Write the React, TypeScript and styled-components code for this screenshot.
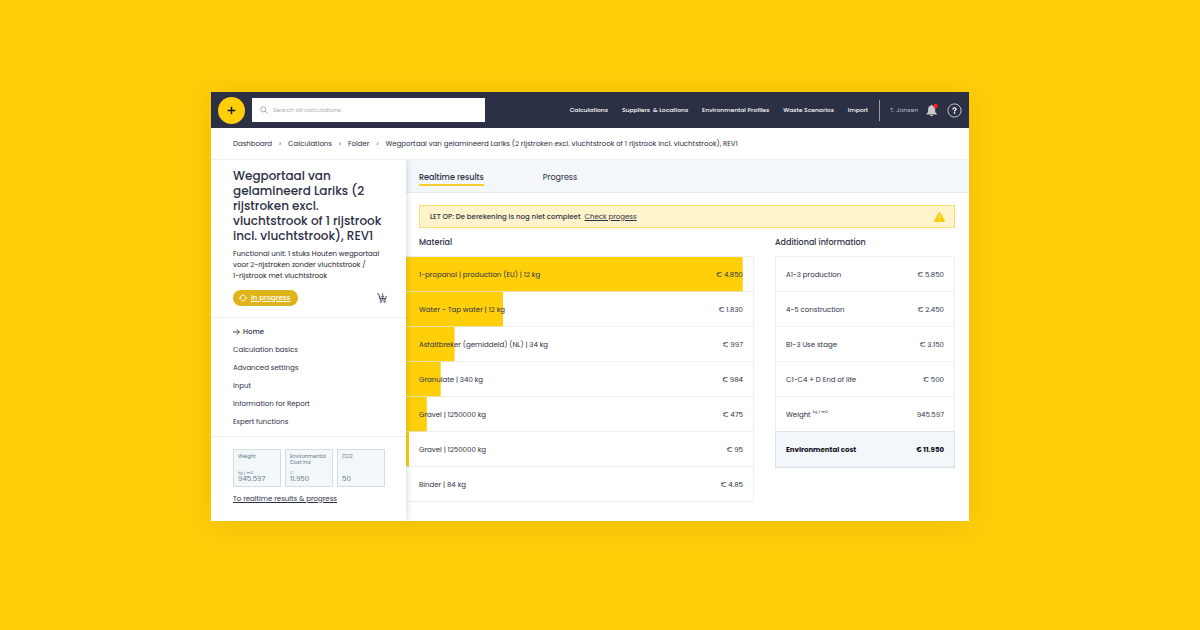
import React from "react";
import styled, { createGlobalStyle } from "styled-components";

const ink = "#2c3044";
const yellow = "#ffcf0a";
const line = "#edeff0";
const mist = "#f3f7fa";

const GlobalStyle = createGlobalStyle`
  *, *::before, *::after { box-sizing: border-box; }
  body {
    margin: 0;
    background: ${yellow};
    color: ${ink};
    font-family: Poppins, Inter, "Liberation Sans", sans-serif;
    font-size: 7px;
    line-height: 12px;
  }
  a { color: inherit; text-decoration: none; }
  button, input { font: inherit; color: inherit; }
  h1, h2, p, ul, ol, dl, dd { margin: 0; padding: 0; }
  ul, ol { list-style: none; }
`;

const Page = styled.div`
  min-height: 100vh;
  padding: 92px 231px 109px 211px;
`;

const Window = styled.div`
  display: flex;
  flex-direction: column;
  min-width: 720px;
  background: #fff;
  box-shadow: 0 4px 28px rgba(120, 90, 0, 0.16);
`;

const TopBar = styled.header`
  display: flex;
  align-items: center;
  height: 36px;
  padding: 0 7px;
  background: ${ink};
  color: #fff;
`;

const AddButton = styled.button`
  display: grid;
  place-items: center;
  flex: none;
  width: 27px;
  height: 27px;
  padding: 0;
  border: 0;
  border-radius: 50%;
  background: ${yellow};
  color: #16181f;
  cursor: pointer;
`;

const SearchBox = styled.label`
  display: flex;
  align-items: center;
  gap: 5px;
  flex: 0 1 233px;
  height: 24px;
  margin-left: 7px;
  padding: 0 8px;
  background: #fff;
  color: #9c9ea6;
`;

const SearchInput = styled.input`
  flex: 1;
  min-width: 0;
  padding: 0;
  border: 0;
  outline: 0;
  background: transparent;
  font-size: 6px;
  line-height: 12px;
  &::placeholder { color: #a9aab0; opacity: 1; }
`;

const MainNav = styled.nav`
  display: flex;
  gap: 14px;
  margin-left: auto;
  padding-right: 11px;
  font-size: 6px;
  font-weight: 500;
  white-space: pre;
`;

const UserArea = styled.div`
  display: flex;
  align-items: center;
  height: 21px;
  padding-left: 10px;
  border-left: 1px solid #9a9ca6;
  color: #b9bbc3;
  font-size: 6px;
  white-space: nowrap;
`;

const IconButton = styled.button`
  display: grid;
  place-items: center;
  padding: 0;
  border: 0;
  background: transparent;
  cursor: pointer;
`;

const BellButton = styled(IconButton)`
  margin: 0 9px 0 8px;
`;

const Breadcrumbs = styled.ol`
  display: flex;
  align-items: center;
  height: 32px;
  padding: 0 22px;
  border-bottom: 1px solid ${line};
  white-space: nowrap;
`;

const Crumb = styled.li`
  & + &::before {
    content: "›";
    margin: 0 7px;
  }
`;

const Body = styled.div`
  display: grid;
  grid-template-columns: 195px 1fr;
`;

const Sidebar = styled.aside`
  z-index: 1;
  box-shadow: 2px 0 5px rgba(40, 50, 70, 0.14);
  clip-path: inset(0 -8px 0 0);
`;

const Summary = styled.section`
  padding: 8px 19px 11px 22px;
  border-bottom: 1px solid ${line};
`;

const Title = styled.h1`
  font-size: 12px;
  line-height: 15px;
  font-weight: 500;
  white-space: nowrap;
`;

const Unit = styled.p`
  margin-top: 5px;
  line-height: 11px;
  color: #23252f;
  white-space: nowrap;
`;

const StatusRow = styled.div`
  display: flex;
  align-items: center;
  justify-content: space-between;
  margin-top: 9px;
`;

const Status = styled.a`
  display: flex;
  align-items: center;
  gap: 4px;
  height: 16px;
  padding: 0 8px 0 6px;
  border-radius: 8px;
  background: #dfb31a;
  color: #fff;
  font-weight: 500;
  span { text-decoration: underline; }
`;

const SideNav = styled.nav`
  display: flex;
  flex-direction: column;
  gap: 6px;
  padding: 8px 22px;
  border-bottom: 1px solid ${line};
`;

const SideLink = styled.a<{ $active?: boolean }>`
  display: flex;
  align-items: center;
  gap: 3px;
  font-weight: ${(p) => (p.$active ? 500 : 400)};
`;

const Totals = styled.section`
  padding: 12px 20px 16px 22px;
`;

const TotalCards = styled.dl`
  display: grid;
  grid-template-columns: repeat(3, 48px);
  gap: 4px;
  margin-bottom: 6px;
`;

const TotalCard = styled.div`
  display: flex;
  flex-direction: column;
  justify-content: space-between;
  height: 38px;
  padding: 4px 4px 3px;
  border: 1px solid #d2dfe5;
  background: ${mist};
  color: #5d7c88;
`;

const TotalLabel = styled.dt`
  font-size: 5px;
  line-height: 6px;
`;

const TotalValue = styled.dd`
  line-height: 8px;
  small {
    display: block;
    font-size: 4px;
    line-height: 5px;
  }
`;

const Underlined = styled.a`
  text-decoration: underline;
  text-underline-offset: 1px;
`;

const Content = styled.main`
  min-width: 0;
`;

const Tabs = styled.nav`
  display: flex;
  align-items: flex-start;
  gap: 59px;
  height: 33px;
  padding: 12px 13px 0;
  border-bottom: 1px solid #e4e9ed;
  background: ${mist};
  font-size: 8px;
`;

const Tab = styled.a<{ $active?: boolean }>`
  border-bottom: 2px solid ${(p) => (p.$active ? "#f8cf2c" : "transparent")};
  font-weight: ${(p) => (p.$active ? 500 : 400)};
`;

const Alert = styled.div`
  display: flex;
  align-items: center;
  gap: 4px;
  height: 23px;
  margin: 12px 14px 0 13px;
  padding: 0 9px 0 10px;
  border: 1px solid #f7e06c;
  background: #fff3cb;
  svg { margin-left: auto; }
`;

const AlertText = styled.span`
  font-weight: 500;
`;

const Panels = styled.div`
  display: grid;
  grid-template-columns: 1fr 180px;
  align-items: start;
  gap: 21px;
  padding: 7px 14px 19px 0;
`;

const Heading = styled.h2<{ $inset?: boolean }>`
  height: 21px;
  padding-left: ${(p) => (p.$inset ? 13 : 0)}px;
  font-size: 8px;
  line-height: 16px;
  font-weight: 500;
`;

const DataTable = styled.table<{ $boxed?: boolean }>`
  width: 100%;
  border-spacing: 0;
  border: 1px solid ${line};
  border-bottom: 0;
  border-left-width: ${(p) => (p.$boxed ? 1 : 0)}px;
`;

const Row = styled.tr<{ $share?: number; $total?: boolean }>`
  height: 35px;
  background-color: ${(p) => (p.$total ? mist : "transparent")};
  background-image: linear-gradient(${yellow}, ${yellow});
  background-repeat: no-repeat;
  background-size: ${(p) => p.$share ?? 0}% 100%;
  font-weight: ${(p) => (p.$total ? 700 : 400)};
  color: ${(p) => (p.$total ? "#0b0d16" : ink)};
  outline: ${(p) => (p.$total ? "1px solid #d7e3e6" : "none")};
`;

const Name = styled.th<{ $inset: number }>`
  padding: 1px 0 0 ${(p) => p.$inset}px;
  border-bottom: 1px solid rgba(228, 231, 233, 0.7);
  font-weight: inherit;
  text-align: left;
  sup {
    margin-left: 2px;
    font-size: 4px;
    line-height: 4px;
  }
`;

const Amount = styled.td`
  padding: 1px 10px 0 0;
  border-bottom: 1px solid rgba(228, 231, 233, 0.7);
  text-align: right;
  white-space: nowrap;
`;

const materials = [
  { name: "1-propanol | production (EU) | 12 kg", cost: "€ 4.850", share: 97 },
  { name: "Water - Tap water | 12 kg", cost: "€ 1.830", share: 28 },
  { name: "Asfaltbreker (gemiddeld) (NL) | 34 kg", cost: "€ 997", share: 14 },
  { name: "Granulate | 340 kg", cost: "€ 984", share: 10 },
  { name: "Gravel | 1250000 kg", cost: "€ 475", share: 6 },
  { name: "Gravel | 1250000 kg", cost: "€ 95", share: 1 },
  { name: "Binder | 84 kg", cost: "€ 4.85", share: 0 },
];

const stages = [
  { name: "A1-3 production", cost: "€ 5.850" },
  { name: "4-5 construction", cost: "€ 2.450" },
  { name: "B1-3 Use stage", cost: "€ 3.150" },
  { name: "C1-C4 + D End of life", cost: "€ 500" },
  { name: "Weight", unit: "kg / m2", cost: "945.597" },
  { name: "Environmental cost", cost: "€ 11.950", total: true },
];

const sections = [
  "Home",
  "Calculation basics",
  "Advanced settings",
  "Input",
  "Information for Report",
  "Expert functions",
];

const totals = [
  { label: "Weight", unit: "kg / m2", value: "945.597" },
  { label: "Environmental Cost ind", unit: "€", value: "11.950" },
  { label: "CO2", value: "50" },
];

const PlusIcon = () => (
  <svg width="9" height="9" viewBox="0 0 9 9" stroke="currentColor" strokeWidth="1.5" aria-hidden="true">
    <path d="M4.5 .7v7.6M.7 4.5h7.6" />
  </svg>
);

const SearchIcon = () => (
  <svg width="8" height="8" viewBox="0 0 8 8" fill="none" stroke="currentColor" strokeWidth=".8" aria-hidden="true">
    <circle cx="3.3" cy="3.3" r="2.6" />
    <path d="M5.2 5.2 7.5 7.5" />
  </svg>
);

const BellIcon = () => (
  <svg width="12" height="14" viewBox="0 0 12 14" aria-hidden="true">
    <path
      d="M4.900 2.600C4.900 1.500 6.300 1.500 6.300 2.600 8.300 3 9.200 4.400 9.200 6.300V9L10.800 10.800V11.600H.5V10.800L2.100 9V6.300C2.100 4.400 3 3 4.900 2.600ZM4.200 12H7C7 13.600 4.200 13.600 4.200 12Z"
      fill="#c9c9cb"
    />
    <circle cx="9.500" cy="3" r="2.200" fill="#fb1f1f" />
  </svg>
);

const HelpIcon = () => (
  <svg width="15" height="15" viewBox="0 0 15 15" fill="none" aria-hidden="true">
    <circle cx="7.500" cy="7.500" r="6.600" stroke="#c3c4ca" strokeWidth="1" />
    <path d="M5.900 6.400C5.900 4.500 9.100 4.500 9.100 6.200 9.100 7.200 7.500 7.200 7.500 8.400" stroke="#fff" strokeWidth="1.300" />
    <circle cx="7.500" cy="9.900" r=".8" fill="#fff" />
  </svg>
);

const RefreshIcon = () => (
  <svg width="8" height="8" viewBox="0 0 8 8" fill="none" stroke="#fff" strokeWidth=".9" aria-hidden="true">
    <path d="M1.200 4.800A2.900 2.900 0 0 1 5.700 1.700M6.800 3.200A2.900 2.900 0 0 1 2.300 6.300" />
    <path d="M0 3.700 1.200 5.100 2.500 3.900M8 4.300 6.800 2.900 5.500 4.100" />
  </svg>
);

const CartIcon = () => (
  <svg width="10" height="10" viewBox="0 0 10 10" fill="none" stroke={ink} strokeWidth=".8" aria-hidden="true">
    <path d="M.2 .9H1.700L3.300 7H8.200L9.500 2.800M2.400 3.500 3 5.500H8.600" />
    <path d="M5.700 .3V4.400M4.200 3 5.700 4.600 7.200 3" />
    <circle cx="3.900" cy="8.700" r=".7" />
    <circle cx="7.600" cy="8.700" r=".7" />
  </svg>
);

const ArrowIcon = () => (
  <svg width="7" height="8" viewBox="0 0 7 8" fill="none" stroke="currentColor" strokeWidth=".9" aria-hidden="true">
    <path d="M0 4H6.300M3.700 1.300 6.400 4 3.700 6.700" />
  </svg>
);

const WarningIcon = () => (
  <svg width="11" height="10" viewBox="0 0 11 10" aria-hidden="true">
    <path d="M4.600 .7Q5.500-.5 6.400 .7L10.700 8.200Q11.200 9.800 9.700 9.900H1.300Q-.2 9.800 .3 8.200Z" fill="#fccb0c" />
    <path d="M5.500 3V6.400" stroke="#fff3c8" strokeWidth="1" />
    <circle cx="5.500" cy="8" r=".6" fill="#fff3c8" />
  </svg>
);

export default function App() {
  return (
    <Page>
      <GlobalStyle />
      <Window>
        <TopBar>
          <AddButton type="button" aria-label="Add calculation">
            <PlusIcon />
          </AddButton>
          <SearchBox>
            <SearchIcon />
            <SearchInput type="search" aria-label="Search all calculations" placeholder="Search all calculations" />
          </SearchBox>
          <MainNav>
            <a href="#calculations">Calculations</a>
            <a href="#suppliers">{"Suppliers  & Locations"}</a>
            <a href="#profiles">Environmental Profiles</a>
            <a href="#waste">Waste Scenarios</a>
            <a href="#import">Import</a>
          </MainNav>
          <UserArea>
            <span>T. Jansen</span>
            <BellButton type="button" aria-label="Notifications">
              <BellIcon />
            </BellButton>
            <IconButton type="button" aria-label="Help">
              <HelpIcon />
            </IconButton>
          </UserArea>
        </TopBar>

        <Breadcrumbs>
          <Crumb><a href="#dashboard">Dashboard</a></Crumb>
          <Crumb><a href="#calculations">Calculations</a></Crumb>
          <Crumb><a href="#folder">Folder</a></Crumb>
          <Crumb>
            Wegportaal van gelamineerd Lariks (2 rijstroken excl. vluchtstrook of 1 rijstrook incl. vluchtstrook), REV1
          </Crumb>
        </Breadcrumbs>

        <Body>
          <Sidebar>
            <Summary>
              <Title>
                Wegportaal van<br />gelamineerd Lariks (2<br />rijstroken excl.<br />vluchtstrook of 1 rijstrook<br />incl. vluchtstrook), REV1
              </Title>
              <Unit>
                Functional unit: 1 stuks Houten wegportaal<br />voor 2-rijstroken zonder vluchtstrook /<br />1-rijstrook met vluchtstrook
              </Unit>
              <StatusRow>
                <Status href="#status">
                  <RefreshIcon />
                  <span>In progress</span>
                </Status>
                <IconButton type="button" aria-label="Add to cart">
                  <CartIcon />
                </IconButton>
              </StatusRow>
            </Summary>
            <SideNav>
              {sections.map((name, i) => (
                <SideLink key={name} href="#section" $active={i === 0}>
                  {i === 0 && <ArrowIcon />}
                  {name}
                </SideLink>
              ))}
            </SideNav>
            <Totals>
              <TotalCards>
                {totals.map((t) => (
                  <TotalCard key={t.label}>
                    <TotalLabel>{t.label}</TotalLabel>
                    <TotalValue>
                      {t.unit && <small>{t.unit}</small>}
                      {t.value}
                    </TotalValue>
                  </TotalCard>
                ))}
              </TotalCards>
              <Underlined href="#results">To realtime results &amp; progress</Underlined>
            </Totals>
          </Sidebar>

          <Content>
            <Tabs>
              <Tab href="#results" $active>Realtime results</Tab>
              <Tab href="#progress">Progress</Tab>
            </Tabs>
            <Alert role="status">
              <AlertText>LET OP: De berekening is nog niet compleet</AlertText>
              <Underlined href="#progress">Check progess</Underlined>
              <WarningIcon />
            </Alert>
            <Panels>
              <section>
                <Heading $inset>Material</Heading>
                <DataTable>
                  <tbody>
                    {materials.map((m, i) => (
                      <Row key={i} $share={m.share}>
                        <Name scope="row" $inset={13}>{m.name}</Name>
                        <Amount>{m.cost}</Amount>
                      </Row>
                    ))}
                  </tbody>
                </DataTable>
              </section>
              <section>
                <Heading>Additional information</Heading>
                <DataTable $boxed>
                  <tbody>
                    {stages.map((s) => (
                      <Row key={s.name} $total={s.total}>
                        <Name scope="row" $inset={10}>
                          {s.name}
                          {s.unit && <sup>{s.unit}</sup>}
                        </Name>
                        <Amount>{s.cost}</Amount>
                      </Row>
                    ))}
                  </tbody>
                </DataTable>
              </section>
            </Panels>
          </Content>
        </Body>
      </Window>
    </Page>
  );
}
